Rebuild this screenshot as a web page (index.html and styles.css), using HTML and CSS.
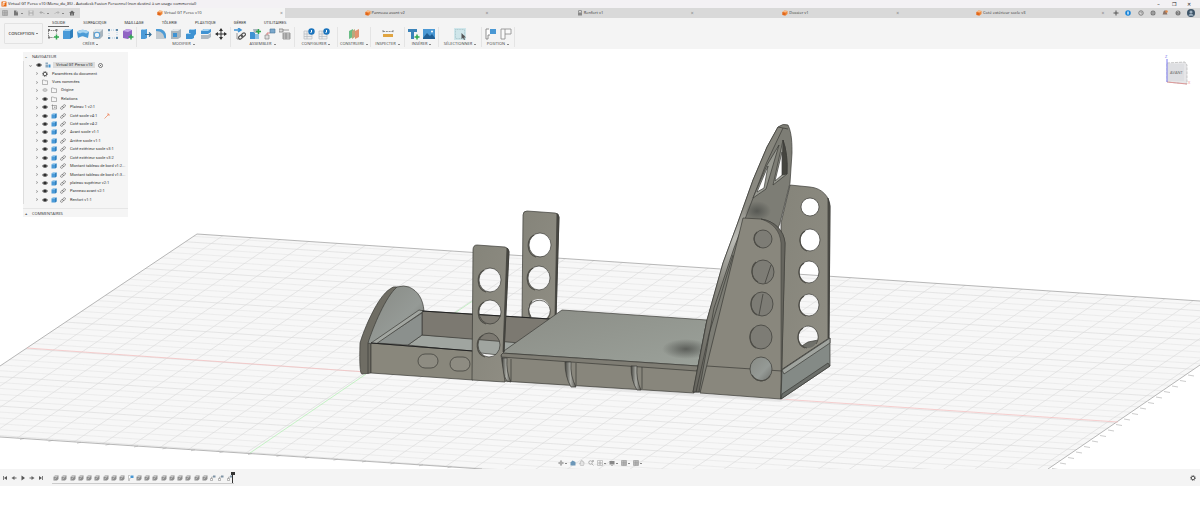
FILE: index.html
```
<!DOCTYPE html>
<html lang="fr">
<head>
    <meta charset="UTF-8">
    <title>Virtual GT Perso v10 - Autodesk Fusion Personnel</title>
    <link rel="stylesheet" href="styles.css">
</head>
<body>
    <!-- icon set -->
    <svg class="sprite" width="0" height="0">
        <symbol id="i-logo" viewBox="0 0 12 12"><rect x="1" y="1" width="10" height="10" rx="1" fill="#e8660c"/><path d="M4 10V3h5M4 6h4" stroke="#fff" stroke-width="1.6" fill="none"/></symbol>
        <symbol id="i-cube" viewBox="0 0 12 12"><path d="M1 4l4-3 6 1v6l-4 3-6-1z" fill="#f08a3c"/><path d="M1 4l6 1v6l-6-1z" fill="#e2661a"/><path d="M1 4l4-3 6 1-4 3z" fill="#f9bd8b"/></symbol>
        <symbol id="i-lock" viewBox="0 0 12 12"><path d="M3 5V3a3 3 0 0 1 6 0v2" stroke="#666" stroke-width="1.5" fill="none"/><rect x="2" y="5" width="8" height="6" fill="#888"/></symbol>
        <symbol id="i-grid" viewBox="0 0 12 12"><path d="M1 1h10v10H1zM1 4.500h10M1 8h10M4.500 1v10M8 1v10" stroke="#888" fill="#ccc"/></symbol>
        <symbol id="i-file" viewBox="0 0 12 12"><path d="M2 1h5l3 3v7H2z" fill="#777"/><path d="M7 1v3h3" stroke="#ddd" fill="none"/></symbol>
        <symbol id="i-save" viewBox="0 0 12 12"><path d="M1 1h10v10H1z" fill="#aaa"/><path d="M3 1h6v4H3zM3 7h6v4H3z" fill="#ddd"/></symbol>
        <symbol id="i-undo" viewBox="0 0 12 12"><path d="M5 2L2 5l3 3M2 5h6l3 3" stroke="#999" stroke-width="1.400" fill="none"/></symbol>
        <symbol id="i-redo" viewBox="0 0 12 12"><path d="M7 2l3 3-3 3M10 5H4L1 8" stroke="#aaa" stroke-width="1.400" fill="none"/></symbol>
        <symbol id="i-home" viewBox="0 0 12 12"><path d="M0 6l6-5 6 5h-2v5H2V6z" fill="#666"/><path d="M5 7h2v4H5z" fill="#bbb"/></symbol>
        <symbol id="i-plus" viewBox="0 0 12 12"><path d="M6 1v10M1 6h10" stroke="#555" stroke-width="2"/></symbol>
        <symbol id="i-ext" viewBox="0 0 12 12"><circle cx="6" cy="6" r="5.500" fill="#1683d8"/><path d="M6 3v6" stroke="#fff" stroke-width="2.500"/></symbol>
        <symbol id="i-clock" viewBox="0 0 12 12"><circle cx="6" cy="6" r="4.500" fill="none" stroke="#666" stroke-width="1.500"/><path d="M6 3v3h3" stroke="#666" fill="none"/></symbol>
        <symbol id="i-globe" viewBox="0 0 12 12"><circle cx="6" cy="6" r="5" fill="#777"/><path d="M1 6h10M6 1v10" stroke="#ccc"/></symbol>
        <symbol id="i-bell" viewBox="0 0 12 12"><path d="M6 1c4 0 3 5 5 8H1c2-3 1-8 5-8z" fill="#8a7469"/><circle cx="9" cy="3" r="2.500" fill="#e08a4a"/></symbol>
        <symbol id="i-help" viewBox="0 0 12 12"><circle cx="6" cy="6" r="5" fill="#777"/><path d="M4 4.500c0-3 4-2 3 .5L6 7v2" stroke="#ddd" fill="none"/></symbol>
        <symbol id="i-user" viewBox="0 0 12 12"><circle cx="6" cy="6" r="6" fill="#3d5468"/><circle cx="6" cy="4.500" r="2.300" fill="#9eb0bf"/><path d="M2 10c1-4 7-4 8 0z" fill="#9eb0bf"/></symbol>

        <symbol id="i-sketch" viewBox="0 0 12 12"><path d="M1.500 2.500h8M1.500 2.500v7h5M9.500 2.500v3" stroke="#666" stroke-width=".8" stroke-dasharray="1.500 .7" fill="none"/><path d="M1 1h2v2H1zM8.500 1h2v2h-2zM1 8.500h2v2H1z" fill="#777"/><path d="M9.500 6.500v5M7 9h5" stroke="#2fa84f" stroke-width="1.500"/></symbol>
        <symbol id="i-box" viewBox="0 0 12 12"><path d="M1 3l3-2h7v8l-3 2H1z" fill="#4a9ad8"/><path d="M1 3l3-2h7L8 3z" fill="#a5d3f1"/><path d="M8 3l3-2v8l-3 2z" fill="#2f7fbc"/></symbol>
        <symbol id="i-surf" viewBox="0 0 12 12"><path d="M0 4c3-3 8-3 12 0l-1 6-3-1c-2-1-3-1-5 0l-2 1z" fill="#4b9bd6"/><path d="M0 4c3-3 8-3 12 0L9 5.500C7 4 5 4 3 5.500z" fill="#a5d3f1"/></symbol>
        <symbol id="i-hole" viewBox="0 0 12 12"><path d="M1 4l3-3h7v7l-3 3H1z" fill="#a8b4bd"/><path d="M1 4l3-3h7L8 4z" fill="#dce3e8"/><circle cx="5" cy="7" r="2.800" fill="#e9f2f8" stroke="#4b9bd6"/></symbol>
        <symbol id="i-pattern" viewBox="0 0 12 12"><path d="M2 2h8v8H2z" stroke="#8bb9dc" stroke-width=".7" stroke-dasharray="1 1" fill="none"/><path d="M1 1h2v2H1zM9 1h2v2H9zM1 9h2v2H1zM9 9h2v2H9z" fill="#5d87a8"/></symbol>
        <symbol id="i-form" viewBox="0 0 12 12"><path d="M1 3l4-2 5 1v6l-4 3-5-1z" fill="#9164c4"/><path d="M1 3l4-2 5 1-4 2z" fill="#c4a4e8"/><path d="M9 6.500v5M6.500 9h5" stroke="#2fa84f" stroke-width="1.500"/></symbol>
        <symbol id="i-push" viewBox="0 0 12 12"><path d="M1 2l2-1h4v9l-2 1H1z" fill="#4a9ad8"/><path d="M1 2l2-1h4L5 2z" fill="#a5d3f1"/><path d="M5 6.500h6M9 4.500l2 2-2 2" stroke="#356d96" stroke-width="1.200" fill="none"/></symbol>
        <symbol id="i-fillet" viewBox="0 0 12 12"><path d="M1 11V1h3c4 0 7 3 7 7v3z" fill="#c2cad0"/><path d="M1 3V1h3c4 0 7 3 7 7v2c-1 0-2 0-2-1C9 6 6 3 1 3z" fill="#4b9bd6"/></symbol>
        <symbol id="i-shell" viewBox="0 0 12 12"><path d="M1 3l3-2h7v8l-3 2H1z" fill="#aab5bd"/><path d="M1 3l3-2h7L8 3z" fill="#e0e6ea"/><path d="M3 5h4v4H3z" fill="#3f93d3"/></symbol>
        <symbol id="i-combine" viewBox="0 0 12 12"><path d="M4 2l2-1h5v5L9 8v2l-2 1H1V6l3-1z" fill="#3f93d3"/><path d="M4 2l2-1h5L9 2zM1 6l2-1h3L5 6z" fill="#a5d3f1"/></symbol>
        <symbol id="i-split" viewBox="0 0 12 12"><path d="M1 3l3-2h7v3L8 6H1z" fill="#3f93d3"/><path d="M1 3l3-2h7L8 3z" fill="#a5d3f1"/><path d="M1 7h7l3-2v4l-3 2H1z" fill="#aeb9c1"/></symbol>
        <symbol id="i-move" viewBox="0 0 12 12"><path d="M6 1v10M1 6h10" stroke="#333" stroke-width="1"/><path d="M6 0l2 3H4zM6 12l2-3H4zM0 6l3-2v4zM12 6L9 4v4z" fill="#333"/></symbol>
        <symbol id="i-link" viewBox="0 0 12 12"><path d="M0 2h6M4 0l3 2-3 2" stroke="#3f93d3" stroke-width="1.500" fill="none"/><path d="M3 5v6h3" stroke="#999" fill="none"/><g transform="rotate(-40 8 8)" fill="none" stroke="#555" stroke-width="1.100"><rect x="4" y="6.500" width="4.500" height="3" rx="1.500"/><rect x="7.500" y="6.500" width="4.500" height="3" rx="1.500"/></g></symbol>
        <symbol id="i-newcomp" viewBox="0 0 12 12"><path d="M1 4h5v7H1z" fill="#3f93d3"/><path d="M4 1h6v4H5z" fill="#a9b5be"/><path d="M6 6h4v5H6z" fill="#8fc2e6"/><path d="M9.500 1v5M7 3.500h5" stroke="#2fa84f" stroke-width="1.500"/></symbol>
        <symbol id="i-joint" viewBox="0 0 12 12"><path d="M6 1h5v4H6z" fill="#7ba8cc" stroke="#4a7598" stroke-width=".6"/><path d="M1 7h4v4H1z" fill="#ddd" stroke="#888" stroke-width=".7"/><path d="M3 7V5h3" stroke="#c55" fill="none" stroke-width=".7"/></symbol>
        <symbol id="i-table" viewBox="0 0 12 12"><path d="M0 1h4v3H0zM4 5h7v6H4z" fill="#ddd" stroke="#777" stroke-width=".7"/><path d="M4 2h6M4 7h7M4 9h7M7 5v6" stroke="#777" stroke-width=".7"/></symbol>
        <symbol id="i-config" viewBox="0 0 12 12"><path d="M1 3h8v8H1zM1 6h8M1 8.500h8M4 3v8" stroke="#b4bac0" fill="#eee" stroke-width=".7"/><circle cx="8.500" cy="3.500" r="3.200" fill="#1b74bd"/><path d="M8.500 2v2l-1 1" stroke="#fff" fill="none"/></symbol>
        <symbol id="i-plane" viewBox="0 0 12 12"><path d="M1 3l4-2v8l-4 2z" fill="#6bbd86"/><path d="M4 3l3-2v8l-3 2z" fill="#bba77c"/><path d="M7 3l4-2v8l-4 2z" fill="#e39371"/></symbol>
        <symbol id="i-measure" viewBox="0 0 12 12"><path d="M1 6h10v3H1z" fill="#e0a440"/><path d="M1 2v3M11 2v3M1 3.500h10" stroke="#777" stroke-width=".8" stroke-dasharray="2 .8"/></symbol>
        <symbol id="i-insert" viewBox="0 0 12 12"><path d="M0 1h9v3H6v7H3V4H0z" fill="#3b83b9"/><path d="M9 6.500v5M6.500 9h5" stroke="#2fa84f" stroke-width="1.500"/></symbol>
        <symbol id="i-image" viewBox="0 0 12 12"><path d="M0 1h12v10H0z" fill="#4a98d4"/><path d="M0 10l4-5 3 3 2-2 3 4v1H0z" fill="#215f94"/><circle cx="9" cy="3.500" r="1" fill="#fff"/></symbol>
        <symbol id="i-select" viewBox="0 0 12 12"><path d="M0 0h12v12H0z" fill="#cfe6ea"/><path d="M1.500 1.500h9v9h-9z" stroke="#8eb0b8" stroke-width=".5" stroke-dasharray="1 .6" fill="none"/><path d="M7.500 5v6l1.500-1.300L10 12l1-.5-1-2h2z" fill="#555"/></symbol>
        <symbol id="i-flag" viewBox="0 0 12 12"><path d="M4 1H1v10h2V7h2" stroke="#777" stroke-width=".8" fill="#fff"/><path d="M5 1h6v5H5z" fill="#4a98d4"/></symbol>
        <symbol id="i-flag2" viewBox="0 0 12 12"><path d="M1 1h10v5H5v5H1zM5 1v5" stroke="#888" stroke-width=".8" fill="#fafafa"/></symbol>

        <symbol id="i-eye" viewBox="0 0 12 12"><path d="M0 6c3-5 9-5 12 0-3 5-9 5-12 0z" fill="#666"/><circle cx="6" cy="6" r="2.200" fill="#222"/></symbol>
        <symbol id="i-eyeoff" viewBox="0 0 12 12"><path d="M1 6c3-4 7-4 10 0-3 4-7 4-10 0z" fill="#ccc" stroke="#999"/></symbol>
        <symbol id="i-gear" viewBox="0 0 12 12"><circle cx="6" cy="6" r="3.500" stroke="#555" stroke-width="2" fill="none"/><circle cx="6" cy="6" r="5" stroke="#555" stroke-width="1.600" stroke-dasharray="2 1.930" fill="none"/></symbol>
        <symbol id="i-folder" viewBox="0 0 12 12"><path d="M1 2h4l1 1.500h5V11H1z" fill="#f6f6f6" stroke="#777"/></symbol>
        <symbol id="i-chain" viewBox="0 0 12 12"><g transform="rotate(-40 6 6)" fill="none" stroke="#666" stroke-width="1.200"><rect x="0" y="4" width="6.500" height="4" rx="2"/><rect x="5.500" y="4" width="6.500" height="4" rx="2"/></g></symbol>
        <symbol id="i-comp" viewBox="0 0 12 12"><path d="M1 1h5v4H1zM1 6h5v5H1z" fill="#8fa9bd"/><path d="M7 5h4v6H7z" fill="#3f93d3"/></symbol>
        <symbol id="i-body" viewBox="0 0 12 12"><path d="M3 1v10M1 3h10v7H3" stroke="#666" fill="#f5f5f5"/><path d="M6 5h3v3H6z" fill="#aaa"/></symbol>
        <symbol id="i-solid" viewBox="0 0 12 12"><path d="M1 4l3-3h7v7l-3 3H1z" fill="#8d8d8d"/><path d="M1 4l3-3h7L8 4z" fill="#c4c4c4"/><path d="M3 8l4-3" stroke="#eee" stroke-width="1.200"/></symbol>
        <symbol id="i-tjoint" viewBox="0 0 12 12"><path d="M6 1h5v4H6z" fill="#7d93a5"/><path d="M1 7h4v4H1z" fill="#fff" stroke="#777"/><path d="M3 7V4h3" stroke="#888" fill="none"/></symbol>
        <symbol id="i-first" viewBox="0 0 12 12"><path d="M2 2h1.500v8H2zM10 2v8L4 6z" fill="#555"/></symbol>
        <symbol id="i-prev" viewBox="0 0 12 12"><path d="M7 2v8L1 6zM7 5h4v2H7z" fill="#666"/></symbol>
        <symbol id="i-play" viewBox="0 0 12 12"><path d="M3 1l7 5-7 5z" fill="#555"/></symbol>
        <symbol id="i-next" viewBox="0 0 12 12"><path d="M5 2v8l6-4zM1 5h4v2H1z" fill="#666"/></symbol>
        <symbol id="i-last" viewBox="0 0 12 12"><path d="M8.500 2H10v8H8.500zM2 2v8l6-4z" fill="#555"/></symbol>
        <symbol id="i-orbit" viewBox="0 0 12 12"><circle cx="6" cy="6" r="3" fill="none" stroke="#888"/><path d="M6 0v12M0 6h12" stroke="#888" stroke-width="1.500"/></symbol>
        <symbol id="i-look" viewBox="0 0 12 12"><path d="M1 5l4-4 6 3v7H1z" fill="#6c97b8"/></symbol>
        <symbol id="i-hand" viewBox="0 0 12 12"><path d="M3 11L1 6l2 1V3h1.500V1H6v1h2v2h2v4l-1 3z" fill="#e4e4e4" stroke="#aaa"/></symbol>
        <symbol id="i-zoom" viewBox="0 0 12 12"><circle cx="5" cy="5" r="3.500" stroke="#888" stroke-width="1.200" fill="none"/><path d="M8 8l3 3M10 0v4M8 2h4" stroke="#888" stroke-width="1.200"/></symbol>
        <symbol id="i-fit" viewBox="0 0 12 12"><path d="M1 1h10v10H1z" stroke="#999" fill="none"/><circle cx="6" cy="6" r="2.500" stroke="#888" fill="#ddd"/></symbol>
        <symbol id="i-screen" viewBox="0 0 12 12"><path d="M1 2h10v7H1zM4 10h4v1H4z" fill="#888"/></symbol>
    </svg>

    <header class="titlebar">
        <svg class="icon-sm"><use href="#i-logo"/></svg>
        <h1>Virtual GT Perso v10 (Menu_du_85) - Autodesk Fusion Personnel (non destiné à un usage commercial)</h1>
        <div class="window-buttons">
            <button aria-label="Réduire">–</button>
            <button aria-label="Restaurer">❐</button>
            <button aria-label="Fermer">✕</button>
        </div>
    </header>

    <nav class="docbar">
        <div class="quick">
            <button aria-label="Données"><svg class="icon-sm"><use href="#i-grid"/></svg></button>
            <button aria-label="Fichier"><svg class="icon-sm"><use href="#i-file"/></svg><i class="caret"></i></button>
            <button aria-label="Enregistrer"><svg class="icon-sm"><use href="#i-save"/></svg></button>
            <button aria-label="Annuler"><svg class="icon-sm"><use href="#i-undo"/></svg><i class="caret"></i></button>
            <button aria-label="Rétablir"><svg class="icon-sm"><use href="#i-redo"/></svg><i class="caret"></i></button>
            <button aria-label="Accueil"><svg class="icon-sm"><use href="#i-home"/></svg></button>
        </div>
        <div class="doc active"><a href="#"><svg class="icon-sm"><use href="#i-cube"/></svg>Virtual GT Perso v10</a><button aria-label="Fermer l'onglet">×</button></div>
        <div class="doc"><a href="#"><svg class="icon-sm"><use href="#i-cube"/></svg>Panneau avant v2</a><button aria-label="Fermer l'onglet">×</button></div>
        <div class="doc"><a href="#"><svg class="icon-sm"><use href="#i-lock"/></svg>Renfort v1</a><button aria-label="Fermer l'onglet">×</button></div>
        <div class="doc"><a href="#"><svg class="icon-sm"><use href="#i-cube"/></svg>Dossier v1</a><button aria-label="Fermer l'onglet">×</button></div>
        <div class="doc"><a href="#"><svg class="icon-sm"><use href="#i-cube"/></svg>Coté extérieur socle v3</a><button aria-label="Fermer l'onglet">×</button></div>
        <div class="account">
            <button aria-label="Nouveau"><svg class="icon-sm"><use href="#i-plus"/></svg></button>
            <button aria-label="Extensions"><svg class="icon-sm"><use href="#i-ext"/></svg></button>
            <button aria-label="Historique"><svg class="icon-sm"><use href="#i-clock"/></svg></button>
            <button aria-label="En ligne"><svg class="icon-sm"><use href="#i-globe"/></svg></button>
            <button aria-label="Notifications"><svg class="icon-sm"><use href="#i-bell"/></svg></button>
            <button aria-label="Aide"><svg class="icon-sm"><use href="#i-help"/></svg></button>
            <button aria-label="Profil"><svg class="icon-md"><use href="#i-user"/></svg></button>
        </div>
    </nav>

    <section class="ribbon">
        <button class="workspace">CONCEPTION <i class="caret"></i></button>
        <div class="ribbon-main">
            <div class="ribbon-tabs">
                <a class="on" href="#">SOLIDE</a>
                <a href="#">SURFACIQUE</a>
                <a href="#">MAILLAGE</a>
                <a href="#">TÔLERIE</a>
                <a href="#">PLASTIQUE</a>
                <a href="#">GÉRER</a>
                <a href="#">UTILITAIRES</a>
            </div>
            <div class="groups" id="groups"></div>
        </div>
    </section>

    <main class="viewport">
        <svg class="scene" viewBox="0 49 1200 420">
            <defs>
                <clipPath id="floor"><path d="M197 234L1200 301V365L1048 469H482L0 437V366z"/></clipPath>
                <clipPath id="seat"><path d="M745 213l10-20 35-10-9 40-13-4-25-1z"/></clipPath>
                <linearGradient id="face" x1="0" y1="0" x2="1" y2="1"><stop offset="0" stop-color="#85847a"/><stop offset="1" stop-color="#8f8d83"/></linearGradient>
                <linearGradient id="disc" x1="0" y1="0" x2="1" y2="1"><stop offset="0" stop-color="#878a84"/><stop offset=".6" stop-color="#959a96"/><stop offset="1" stop-color="#6d6f6b"/></linearGradient>
                <linearGradient id="deck" x1="0" y1="0" x2="1" y2="1"><stop offset="0" stop-color="#8b8d86"/><stop offset="1" stop-color="#9ba19a"/></linearGradient>
                <linearGradient id="rib" x1="0" y1="0" x2="1" y2="0"><stop offset="0" stop-color="#44443f"/><stop offset=".5" stop-color="#a9aaa4"/><stop offset="1" stop-color="#55544e"/></linearGradient>
                <linearGradient id="beam" x1="0" y1="0" x2="0" y2="1"><stop offset="0" stop-color="#84837a"/><stop offset=".3" stop-color="#8c8b83"/><stop offset=".42" stop-color="#bcbcb6"/><stop offset=".6" stop-color="#85847c"/><stop offset="1" stop-color="#66655e"/></linearGradient>
                <radialGradient id="shade"><stop offset="0" stop-color="#4d4f4b" stop-opacity=".8"/><stop offset="1" stop-color="#4d4f4b" stop-opacity="0"/></radialGradient>
                <mask id="m-rear"><path d="M500 200h80v130h-80z" fill="#fff"/><ellipse cx="540" cy="245" rx="11" ry="12"/><ellipse cx="539" cy="278" rx="11" ry="12"/><ellipse cx="539" cy="310" rx="11" ry="11"/></mask>
                <mask id="m-front"><path d="M460 230h60v170h-60z" fill="#fff"/><ellipse cx="490" cy="280" rx="11" ry="12"/><ellipse cx="490" cy="312" rx="11" ry="12"/><ellipse cx="489" cy="345" rx="11" ry="12"/></mask>
                <mask id="m-side"><path d="M770 170h80v230h-80z" fill="#fff"/><ellipse cx="810" cy="207" rx="9" ry="9"/><ellipse cx="810" cy="240" rx="10" ry="11"/><ellipse cx="809" cy="272" rx="10" ry="11"/><ellipse cx="809" cy="305" rx="10" ry="11"/><ellipse cx="808" cy="337" rx="10" ry="11"/></mask>
                <mask id="m-back"><path d="M680 110h130v300H680z" fill="#fff"/><path d="M768 166l-4 22-7 4zM782 152v23l-7 6z"/></mask>
            </defs>

            <!-- ground grid -->
            <path d="M197 234L1200 301V365L1048 469H482L0 437V366z" fill="#f7f7f7"/>
            <g clip-path="url(#floor)">
                <path id="gridFine" class="grid-fine"/>
                <path id="gridMain" class="grid-main"/>
            </g>
            <path d="M0 366L197 234L1200 301M1200 365L1048 469M482 469L0 437" class="grid-edge"/>
            <path id="gridTicks" class="grid-ticks"/>
            <path d="M27 348L366 372M780 399L1118 422" stroke="#f5bcbc" stroke-width=".7"/>
            <path d="M250 453L366 374M440 323L480 296" stroke="#b0efb0" stroke-width=".7"/>
            <path d="M500 384L780 402l20-8-90-10z" fill="#ddd" opacity=".6"/>

            <g class="model">
                <!-- rear upright -->
                <g mask="url(#m-rear)">
                    <path d="M523 215q0-4 4-4l28 2q4 0 4 4l-3 102h-34z" fill="url(#face)"/>
                    <path d="M557 214l2 3-3 101h-1z" fill="#4b4a45"/>
                </g>
                <g fill="none"><ellipse cx="540" cy="245" rx="11" ry="12"/><ellipse cx="539" cy="278" rx="11" ry="12"/><path d="M530 317a11 11 0 1 1 18 1"/></g>
                <g class="depth"><path d="M534 235a11 12 0 0 0 2 22M533 268a11 12 0 0 0 2 22M532 301a11 12 0 0 0-1 16"/></g>

                <!-- pedal box -->
                <path d="M408 345l14-10 134 9-30 14z" fill="#a0a5a0"/>
                <path d="M422 311l128 8-30 24-98-8z" fill="#7c7971"/>
                <path d="M360 343c4-14 18-47 30-54q3-3 7-2l2 1-28 56v29l-9 1q-3 0-2-31z" fill="#6f6d64"/>
                <path d="M368 343c5-16 18-47 29-56q7-2 12 0c9 4 14 12 15 24l-52 33z" fill="url(#disc)"/>
                <path d="M368 343v31" fill="none"/>
                <path d="M376 343l46-30v22l-14 10z" fill="#8b908d"/>
                <path d="M371 343l48-33 5 1-48 33z" fill="#a2a6a1"/>
                <path d="M371 343l102 8v29l-102-7z" fill="#89877c"/>
                <path d="M371 343l102 8M422 311l128 8" fill="none" class="heavy"/>
                <g fill="#8e8c82"><rect x="418" y="354" width="20" height="14" rx="7"/><rect x="450" y="357" width="20" height="14" rx="7"/></g>

                <!-- deck -->
                <path d="M502 356l197 12-5 25-192-12z" fill="#88867c"/>
                <path d="M501 353l61-43 145 10-9 46z" fill="url(#deck)"/>
                <ellipse cx="686" cy="349" rx="24" ry="10" fill="url(#shade)" stroke="none"/>
                <path d="M501 353l197 13-1 5-196-14z" fill="#7f7d74"/>
                <g fill="url(#rib)">
                    <path d="M502 358h5q-1 14 4 24l-4-1q-6-8-5-23z"/>
                    <path d="M565 362h6q-1 14 5 25h-5q-6-10-6-25z"/>
                    <path d="M631 366h6q-1 14 4 24h-4q-6-9-6-24z"/>
                </g>
                <path d="M511 359v22M576 363v22M642 367v22" fill="none"/>

                <!-- front upright -->
                <g mask="url(#m-front)">
                    <path d="M473 250q0-5 4-5l28 2q4 1 4 5l-5 100-3 3 4 27-33-2z" fill="url(#face)"/>
                    <path d="M507 248l2 3-5 101h-1z" fill="#4b4a45"/>
                </g>
                <g fill="none"><ellipse cx="490" cy="280" rx="11" ry="12"/><ellipse cx="490" cy="312" rx="11" ry="12"/><ellipse cx="489" cy="345" rx="11" ry="12"/></g>
                <g class="depth"><path d="M484 270a11 12 0 0 0 2 22M484 302a11 12 0 0 0 2 22M483 335a11 12 0 0 0 2 22"/></g>

                <!-- far side panel -->
                <path d="M780 360l28-18 20-4-47 32z" fill="#6f706a"/>
                <g mask="url(#m-side)">
                    <path d="M790 185l20 2c12 1 20 10 20 20l-1 131-48 32V223z" fill="url(#face)"/>
                    <path d="M828 198l2 8-1 132h-1z" fill="#55544e"/>
                </g>
                <g fill="none"><ellipse cx="810" cy="207" rx="9" ry="9"/><ellipse cx="810" cy="240" rx="10" ry="11"/><ellipse cx="809" cy="272" rx="10" ry="11"/><ellipse cx="809" cy="305" rx="10" ry="11"/><path d="M816 344a10 11 0 1 0-9 4"/></g>
                <g class="depth"><path d="M805 231a10 11 0 0 0 2 20M804 263a10 11 0 0 0 2 20M804 296a10 11 0 0 0 2 20M803 328a10 11 0 0 0 2 20"/></g>

                <!-- backrest -->
                <g mask="url(#m-back)">
                    <path d="M693 392l14-72 16-57 14-38 16-45 14-33 11-20q5-4 10-2c4 8 4 20 4 28l-2 30-10 40-62 169z" fill="#7d7d75"/>
                    <path d="M693 392l14-72 16-57 14-38 16-45 14-33 11-20 5 1-17 36-16 42-16 42-20 60-15 84z" fill="url(#beam)"/>
                    <path d="M779 145l-13 44-13 9 14-33zM783 140q5 14 4 34l-14 11z" fill="#989991"/>
                    <path d="M783 140q5 14 4 34l-5 1z" fill="#45453f"/>
                </g>
                <path d="M768 166l-4 22-7 4zM782 152v23l-7 6zM783 128l5 1M696 392l13-58 24-79" fill="none"/>
                <g clip-path="url(#seat)"><ellipse cx="757" cy="211" rx="14" ry="10" fill="url(#shade)" stroke="none"/></g>

                <!-- near side panel -->
                <path d="M743 218l18 1c14 2 23 12 24 24l-4 156-81-6z" fill="#89877d"/>
                <path d="M761 219c14 2 23 12 24 24l-4 156V243c-1-12-8-20-20-24z" fill="#66655e" stroke-width=".5"/>
                <path d="M707 366l75 5" fill="none"/>
                <g fill="#7d7c75"><ellipse cx="763" cy="239" rx="9" ry="9"/><ellipse cx="763" cy="272" rx="11" ry="12"/><ellipse cx="762" cy="304" rx="11" ry="12"/><ellipse cx="761" cy="337" rx="11" ry="12"/></g>
                <ellipse cx="761" cy="369" rx="11" ry="12" fill="url(#disc)"/>
                <path d="M771 265l-6 18M763 294l-4 21" fill="none"/>
                <g class="depth"><path d="M757 232a9 9 0 0 0 3 15M756 262a11 12 0 0 0 2 20M755 295a11 12 0 0 0 2 20M754 328a11 12 0 0 0 2 20M752 375a11 12 0 0 0 18 1"/></g>

                <!-- base end -->
                <path d="M782 370l48-32v28l-49 33z" fill="#848a86"/>
                <path d="M782 370l48-32v5l-46 31z" fill="#a0a49f"/>
                <path d="M781 399l49-33-2-3-46 31z" fill="#6b6e6a"/>
            </g>

            <!-- view cube -->
            <g>
                <path d="M1167 63l18-1 2 3v19l-20-2z" fill="#e6e6e8" stroke="#aaa" stroke-width=".6" stroke-dasharray="3 1"/>
                <path d="M1167 64h17v17h-17z" fill="#dedfe2"/>
                <path d="M1167 82l20 2" stroke="#d99"/>
                <path d="M1167 59v23" stroke="#7b7bf0"/>
                <text x="1170" y="74" class="cube-text">AVANT</text>
                <text x="1165" y="58" class="cube-text z">Z</text>
                <text x="1188" y="84" class="cube-text x">X</text>
            </g>
        </svg>

        <aside class="browser">
            <h2><span>–</span>NAVIGATEUR</h2>
            <ul class="tree" id="tree"></ul>
            <h2 class="comments"><span>+</span>COMMENTAIRES</h2>
        </aside>

        <div class="navbar">
            <button aria-label="Orbite"><svg class="icon-sm"><use href="#i-orbit"/></svg><i class="caret"></i></button>
            <button aria-label="Regarder"><svg class="icon-sm"><use href="#i-look"/></svg></button>
            <button aria-label="Panoramique"><svg class="icon-sm"><use href="#i-hand"/></svg></button>
            <button aria-label="Zoom"><svg class="icon-sm"><use href="#i-zoom"/></svg></button>
            <button aria-label="Ajuster"><svg class="icon-sm"><use href="#i-fit"/></svg><i class="caret"></i></button>
            <button aria-label="Affichage"><svg class="icon-sm"><use href="#i-screen"/></svg><i class="caret"></i></button>
            <button aria-label="Grille"><svg class="icon-sm"><use href="#i-grid"/></svg><i class="caret"></i></button>
            <button aria-label="Fenêtres"><svg class="icon-sm"><use href="#i-grid"/></svg><i class="caret"></i></button>
        </div>
    </main>

    <footer class="timeline">
        <div class="player">
            <button aria-label="Début"><svg class="icon-sm"><use href="#i-first"/></svg></button>
            <button aria-label="Précédent"><svg class="icon-sm"><use href="#i-prev"/></svg></button>
            <button aria-label="Lecture"><svg class="icon-sm"><use href="#i-play"/></svg></button>
            <button aria-label="Suivant"><svg class="icon-sm"><use href="#i-next"/></svg></button>
            <button aria-label="Fin"><svg class="icon-sm"><use href="#i-last"/></svg></button>
        </div>
        <div class="features" id="features"></div>
        <button class="settings" aria-label="Paramètres"><svg class="icon-sm"><use href="#i-gear"/></svg></button>
    </footer>

    <script>
        const icon = (name, size) => `<svg class="icon-${size}"><use href="#i-${name}"/></svg>`;

        // Ribbon groups
        const groups = [
            ['CRÉER', ['sketch', 'box', 'surf', 'hole', 'pattern', 'form']],
            ['MODIFIER', ['push', 'fillet', 'shell', 'combine', 'split', 'move']],
            ['ASSEMBLER', ['link', 'newcomp', 'joint', 'table']],
            ['CONFIGURER', ['config', 'config']],
            ['CONSTRUIRE', ['plane']],
            ['INSPECTER', ['measure']],
            ['INSÉRER', ['insert', 'image']],
            ['SÉLECTIONNER', ['select']],
            ['POSITION', ['flag', 'flag2']]
        ];
        document.getElementById('groups').innerHTML = groups.map(([label, tools]) => `
            <div class="group">
                <div class="tools">${tools.map(t => `<button aria-label="${t}">${icon(t, 'lg')}</button>`).join('')}</div>
                <button class="group-label">${label} <i class="caret"></i></button>
            </div>`).join('');

        // Browser tree
        const rows = [
            ['root', ['eye', 'comp'], 'Virtual GT Perso v10'],
            ['', ['gear'], 'Paramètres du document'],
            ['', ['folder'], 'Vues nommées'],
            ['', ['eyeoff', 'folder'], 'Origine'],
            ['', ['eye', 'folder'], 'Relations'],
            ['', ['eye', 'body', 'chain'], 'Plateau 1 v2:1']
        ];
        ['Coté socle v4:1', 'Coté socle v4:2', 'Avant socle v1:1', 'Arrière socle v1:1',
            'Coté extérieur socle v3:1', 'Coté extérieur socle v3:2',
            'Montant tableau de bord v1:2...', 'Montant tableau de bord v1:3...',
            'plateau supérieur v2:1', 'Panneau avant v2:1', 'Renfort v1:1'
        ].forEach((name, i) => rows.push([i ? '' : 'pinned', ['eye', 'box', 'chain'], name]));
        const extras = {
            root: '<input type="radio" checked aria-label="Activer">',
            pinned: '<svg class="icon-sm" viewBox="0 0 12 12"><path d="M1 11L10 2M6 2h4v4" stroke="#ee8a62" stroke-width="1.500" fill="none"/></svg>'
        };
        document.getElementById('tree').innerHTML = rows.map(([cls, icons, name]) => `
            <li class="${cls}"><i class="arrow"></i>${icons.map(i => icon(i, 'sm')).join('')}<span>${name}</span>${extras[cls] || ''}</li>`).join('');

        // Timeline features
        let items = '';
        for (let i = 0; i < 22; i++) {
            const name = i === 9 ? 'flag' : i > 18 ? 'tjoint' : 'solid';
            items += `<button aria-label="Fonction ${i + 1}">${icon(name, 'sm')}</button>`;
        }
        document.getElementById('features').innerHTML = items + '<i class="marker"></i>';

        // Ground grid: two families of parallel lines crossing at the origin
        const ox = 366, oy = 372;
        let fine = '', main = '', ticks = '';
        for (let n = -30; n <= 50; n++) {
            const x = ox + n * 28.5, y = oy + n * 1.94;
            main += `M${x - 400} ${y + 270}L${x + 400} ${y - 270}`;
        }
        for (let n = -30; n <= 40; n++) {
            const y = oy + n * 5.9;
            const line = `M-100 ${y - 466 * 0.068}L1300 ${y + 934 * 0.068}`;
            if (n % 5) fine += line; else main += line;
        }
        for (let x = 22; x < 470; x += 28.5) {
            ticks += `M${x - 2} ${438 + x * 0.066}l4 -1`;
        }
        for (let i = 0; i < 18; i++) {
            ticks += `M${1188 - i * 8} ${375 + i * 5.5}l6 1`;
        }
        document.getElementById('gridFine').setAttribute('d', fine);
        document.getElementById('gridMain').setAttribute('d', main);
        document.getElementById('gridTicks').setAttribute('d', ticks);
    </script>
</body>
</html>
```
FILE: styles.css
```
* {
    margin: 0;
    padding: 0;
    box-sizing: border-box;
}

body {
    font-family: "Open Sans", "Noto Sans", sans-serif;
    font-size: 4px;
    line-height: 6px;
    color: #333;
    background: #fff;
}

button {
    display: flex;
    align-items: center;
    justify-content: center;
    border: none;
    background: none;
    font: inherit;
    color: inherit;
}

a {
    color: inherit;
    text-decoration: none;
}

svg {
    display: block;
    flex: none;
}

.sprite {
    position: absolute;
}

.icon-sm {
    width: 6px;
    height: 6px;
}

.icon-md {
    width: 8px;
    height: 8px;
}

.icon-lg {
    width: 12px;
    height: 12px;
}

.caret {
    flex: none;
    width: 2px;
    height: 1px;
    margin-left: 2px;
    background: #888;
}

/* Title bar */
.titlebar {
    display: flex;
    align-items: center;
    height: 8px;
    padding: 0 4px 0 1px;
    background: #f3f1f4;
}

.titlebar h1 {
    flex: 1;
    margin-left: 1px;
    font-size: 4px;
    font-weight: 400;
    color: #111;
}

.window-buttons {
    display: flex;
}

.window-buttons button {
    width: 15px;
    font-size: 5px;
    color: #222;
}

/* Document tabs */
.docbar {
    display: flex;
    height: 10px;
    background: #d9d9d9;
}

.quick {
    display: flex;
    align-items: center;
    justify-content: space-between;
    width: 80px;
    padding: 0 5px 0 2px;
}

.doc {
    flex: 1;
    display: flex;
    align-items: center;
    padding-right: 1px;
}

.doc.active {
    background: #f4f4f4;
}

.doc a {
    flex: 1;
    display: flex;
    align-items: center;
    justify-content: center;
    gap: 1px;
}

.doc button {
    width: 6px;
    font-size: 5px;
    color: #777;
}

.account {
    display: flex;
    align-items: center;
    justify-content: space-between;
    width: 93px;
    padding: 0 5px 0 6px;
}

/* Ribbon */
.ribbon {
    display: flex;
    align-items: flex-start;
    height: 31px;
    background: #f4f4f4;
}

.workspace {
    width: 39px;
    height: 21px;
    margin: 5px 2px 0 4px;
    border: 1px solid #e2e2e2;
    border-radius: 1px;
    font-weight: 600;
    color: #444;
}

.ribbon-tabs {
    display: flex;
    gap: 18px;
    height: 9px;
    padding: 2px 0 0 7px;
    font-family: Roboto, sans-serif;
    color: #333;
}

.ribbon-tabs .on {
    margin: 0 -4px;
    padding: 0 4px;
    border-bottom: 1px solid #666;
}

.groups {
    display: grid;
    grid-template-columns: 92px 94px 64px 43px 33px 34px 34px 43px 33px;
}

.group {
    display: flex;
    flex-direction: column;
    align-items: center;
    border-right: 1px solid #e4e4e4;
}

.tools {
    display: flex;
    gap: 3px;
    height: 14px;
    align-items: center;
}

.group-label {
    height: 6px;
    color: #444;
}

/* Viewport */
.viewport {
    position: relative;
    overflow: hidden;
}

.scene {
    width: 100%;
    height: auto;
}

.grid-fine {
    stroke: #e4e4e4;
    stroke-width: 0.6;
}

.grid-main {
    stroke: #d8d8d8;
    stroke-width: 0.6;
}

.grid-edge {
    fill: none;
    stroke: #999;
    stroke-width: 0.7;
}

.grid-ticks {
    stroke: #aaa;
    stroke-width: 0.6;
}

.model {
    stroke: #3b3b37;
    stroke-width: 0.7;
    stroke-linejoin: round;
}

.model mask * {
    stroke: none;
}

.model .heavy {
    stroke: #222;
    stroke-width: 1;
}

.model .depth {
    fill: none;
    stroke: #4e4d47;
    stroke-width: 1.2;
}

.cube-text {
    font-size: 4px;
    fill: #666;
}

.cube-text.z {
    fill: #77e;
}

.cube-text.x {
    fill: #e88;
}

/* Browser panel over the scene */
.browser {
    position: absolute;
    top: 3px;
    left: 23px;
    width: 105px;
    background: #f5f5f5;
}

.browser h2 {
    height: 9px;
    padding-left: 2px;
    font-size: 4px;
    font-weight: 400;
    line-height: 9px;
}

.browser h2 span {
    display: inline-block;
    width: 7px;
    font-weight: 700;
}

.comments {
    margin-top: 4px;
    border-top: 1px solid #e6e6e6;
}

.tree {
    display: grid;
    grid-auto-rows: 1fr;
    height: 143px;
    padding-left: 9px;
    border-left: 1px solid #ddd;
    font-family: Roboto, sans-serif;
    list-style: none;
}

.tree li {
    display: flex;
    align-items: center;
    gap: 3px;
    white-space: nowrap;
}

.tree .root {
    margin-left: -6px;
}

.tree .root span {
    margin-left: -1px;
    padding: 0 3px;
    background: #dcdcdc;
}

.tree input {
    appearance: none;
    width: 5px;
    height: 5px;
    border: 1px solid #777;
    border-radius: 50%;
    background: #333;
    background-clip: content-box;
    padding: 1px;
}

.tree span {
    margin-left: 1px;
}

.tree .pinned span {
    margin-right: 4px;
}

.arrow {
    width: 3px;
    height: 3px;
    margin: 0 1px 0 2px;
    border-top: 1px solid #999;
    border-right: 1px solid #999;
    transform: rotate(45deg) scale(0.7);
}

.tree .root .arrow {
    transform: rotate(135deg) scale(0.7);
}

/* View controls */
.navbar {
    position: absolute;
    left: 50%;
    bottom: 3px;
    display: flex;
    gap: 3px;
    transform: translateX(-50%);
}

.navbar .caret {
    margin-left: 1px;
}

/* Timeline */
.timeline {
    display: flex;
    align-items: center;
    height: 17px;
    background: #f4f4f4;
}

.player {
    display: flex;
    justify-content: space-between;
    width: 42px;
    margin: 0 8px 0 2px;
}

.features {
    position: relative;
    display: flex;
    width: 182px;
    padding: 3px 0 2px;
    border-bottom: 1px solid #ccc;
}

.features button {
    flex: 1;
}

.marker {
    position: absolute;
    top: 0;
    right: -1px;
    width: 4px;
    height: 3px;
    background: #333;
}

.marker::after {
    content: '';
    position: absolute;
    left: 1px;
    width: 1px;
    height: 11px;
    background: #333;
}

.settings {
    margin: 0 4px 0 auto;
}
```
